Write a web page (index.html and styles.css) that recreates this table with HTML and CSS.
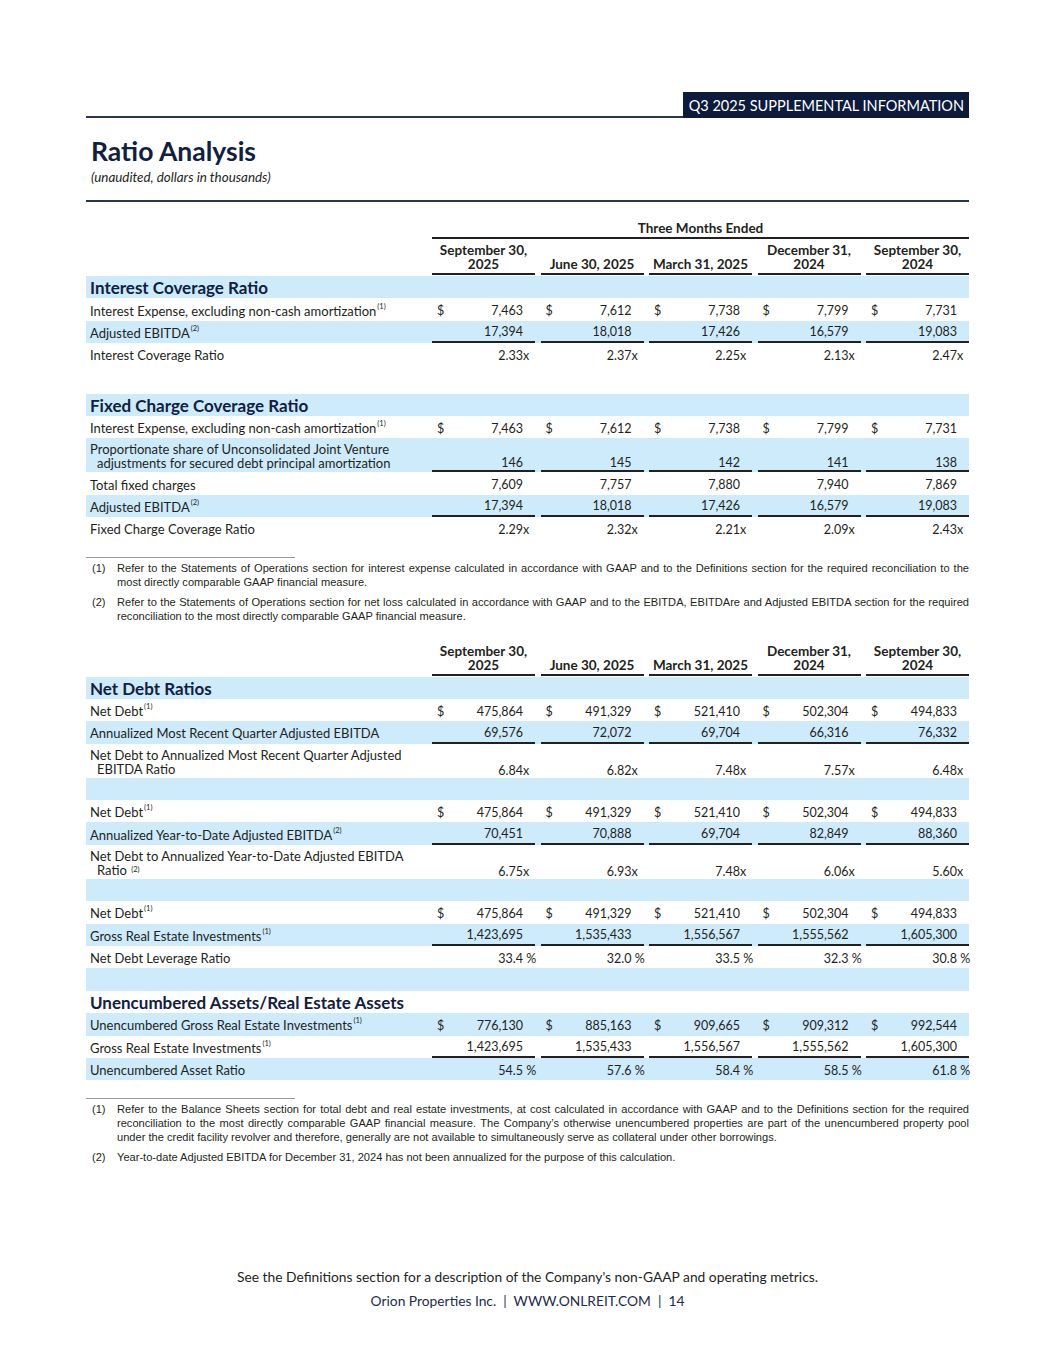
FILE: index.html
```html
<!DOCTYPE html>
<html>
<head>
<meta charset="utf-8">
<title>Ratio Analysis</title>
<link rel="stylesheet" href="styles.css">
</head>
<body>
<div class="page">
  <div class="topbar">
    <div class="topline"></div>
    <div class="tag">Q3 2025 SUPPLEMENTAL INFORMATION</div>
  </div>
  <h1 class="title">Ratio Analysis</h1>
  <div class="subtitle">(unaudited, dollars in thousands)</div>
  <div class="rule"></div>

  <div class="tbl t1">
    <div class="row tme"><div></div><div class="span5">Three Months Ended</div></div>
    <div class="row head">
      <div></div>
      <div class="h">September 30,<br>2025</div>
      <div class="h">June 30, 2025</div>
      <div class="h">March 31, 2025</div>
      <div class="h">December 31,<br>2024</div>
      <div class="h">September 30,<br>2024</div>
    </div>
    <div class="row sec blue"><div class="lbl">Interest Coverage Ratio</div></div>
    <div class="row">
      <div class="lbl">Interest Expense, excluding non-cash amortization <sup>(1)</sup></div>
      <div class="v"><span>$</span><span class="n">7,463</span></div>
      <div class="v"><span>$</span><span class="n">7,612</span></div>
      <div class="v"><span>$</span><span class="n">7,738</span></div>
      <div class="v"><span>$</span><span class="n">7,799</span></div>
      <div class="v"><span>$</span><span class="n">7,731</span></div>
    </div>
    <div class="row blue ul">
      <div class="lbl">Adjusted EBITDA <sup>(2)</sup></div>
      <div class="v"><span class="n">17,394</span></div>
      <div class="v"><span class="n">18,018</span></div>
      <div class="v"><span class="n">17,426</span></div>
      <div class="v"><span class="n">16,579</span></div>
      <div class="v"><span class="n">19,083</span></div>
    </div>
    <div class="row">
      <div class="lbl">Interest Coverage Ratio</div>
      <div class="v"><span class="n">2.33<span class="sx">x</span></span></div>
      <div class="v"><span class="n">2.37<span class="sx">x</span></span></div>
      <div class="v"><span class="n">2.25<span class="sx">x</span></span></div>
      <div class="v"><span class="n">2.13<span class="sx">x</span></span></div>
      <div class="v"><span class="n">2.47<span class="sx">x</span></span></div>
    </div>

    <div class="row sec blue gapabove"><div class="lbl">Fixed Charge Coverage Ratio</div></div>
    <div class="row">
      <div class="lbl">Interest Expense, excluding non-cash amortization <sup>(1)</sup></div>
      <div class="v"><span>$</span><span class="n">7,463</span></div>
      <div class="v"><span>$</span><span class="n">7,612</span></div>
      <div class="v"><span>$</span><span class="n">7,738</span></div>
      <div class="v"><span>$</span><span class="n">7,799</span></div>
      <div class="v"><span>$</span><span class="n">7,731</span></div>
    </div>
    <div class="row blue ul two">
      <div class="lbl">Proportionate share of Unconsolidated Joint Venture adjustments for secured debt principal amortization</div>
      <div class="v"><span class="n">146</span></div>
      <div class="v"><span class="n">145</span></div>
      <div class="v"><span class="n">142</span></div>
      <div class="v"><span class="n">141</span></div>
      <div class="v"><span class="n">138</span></div>
    </div>
    <div class="row">
      <div class="lbl">Total fixed charges</div>
      <div class="v"><span class="n">7,609</span></div>
      <div class="v"><span class="n">7,757</span></div>
      <div class="v"><span class="n">7,880</span></div>
      <div class="v"><span class="n">7,940</span></div>
      <div class="v"><span class="n">7,869</span></div>
    </div>
    <div class="row blue ul">
      <div class="lbl">Adjusted EBITDA <sup>(2)</sup></div>
      <div class="v"><span class="n">17,394</span></div>
      <div class="v"><span class="n">18,018</span></div>
      <div class="v"><span class="n">17,426</span></div>
      <div class="v"><span class="n">16,579</span></div>
      <div class="v"><span class="n">19,083</span></div>
    </div>
    <div class="row">
      <div class="lbl">Fixed Charge Coverage Ratio</div>
      <div class="v"><span class="n">2.29<span class="sx">x</span></span></div>
      <div class="v"><span class="n">2.32<span class="sx">x</span></span></div>
      <div class="v"><span class="n">2.21<span class="sx">x</span></span></div>
      <div class="v"><span class="n">2.09<span class="sx">x</span></span></div>
      <div class="v"><span class="n">2.43<span class="sx">x</span></span></div>
    </div>
  </div>

  <div class="notes n1">
    <div class="sep"></div>
    <div class="note"><span class="mk">(1)</span><p>Refer to the Statements of Operations section for interest expense calculated in accordance with GAAP and to the Definitions section for the required reconciliation to the most directly comparable GAAP financial measure.</p></div>
    <div class="note"><span class="mk">(2)</span><p>Refer to the Statements of Operations section for net loss calculated in accordance with GAAP and to the EBITDA, EBITDAre and Adjusted EBITDA section for the required reconciliation to the most directly comparable GAAP financial measure.</p></div>
  </div>

  <div class="tbl t2">
    <div class="row head">
      <div></div>
      <div class="h">September 30,<br>2025</div>
      <div class="h">June 30, 2025</div>
      <div class="h">March 31, 2025</div>
      <div class="h">December 31,<br>2024</div>
      <div class="h">September 30,<br>2024</div>
    </div>
    <div class="row sec blue"><div class="lbl">Net Debt Ratios</div></div>
    <div class="row">
      <div class="lbl">Net Debt <sup>(1)</sup></div>
      <div class="v"><span>$</span><span class="n">475,864</span></div>
      <div class="v"><span>$</span><span class="n">491,329</span></div>
      <div class="v"><span>$</span><span class="n">521,410</span></div>
      <div class="v"><span>$</span><span class="n">502,304</span></div>
      <div class="v"><span>$</span><span class="n">494,833</span></div>
    </div>
    <div class="row blue ul">
      <div class="lbl">Annualized Most Recent Quarter Adjusted EBITDA</div>
      <div class="v"><span class="n">69,576</span></div>
      <div class="v"><span class="n">72,072</span></div>
      <div class="v"><span class="n">69,704</span></div>
      <div class="v"><span class="n">66,316</span></div>
      <div class="v"><span class="n">76,332</span></div>
    </div>
    <div class="row two">
      <div class="lbl">Net Debt to Annualized Most Recent Quarter Adjusted EBITDA Ratio</div>
      <div class="v"><span class="n">6.84<span class="sx">x</span></span></div>
      <div class="v"><span class="n">6.82<span class="sx">x</span></span></div>
      <div class="v"><span class="n">7.48<span class="sx">x</span></span></div>
      <div class="v"><span class="n">7.57<span class="sx">x</span></span></div>
      <div class="v"><span class="n">6.48<span class="sx">x</span></span></div>
    </div>
    <div class="row blue"></div>
    <div class="row">
      <div class="lbl">Net Debt <sup>(1)</sup></div>
      <div class="v"><span>$</span><span class="n">475,864</span></div>
      <div class="v"><span>$</span><span class="n">491,329</span></div>
      <div class="v"><span>$</span><span class="n">521,410</span></div>
      <div class="v"><span>$</span><span class="n">502,304</span></div>
      <div class="v"><span>$</span><span class="n">494,833</span></div>
    </div>
    <div class="row blue ul">
      <div class="lbl">Annualized Year-to-Date Adjusted EBITDA <sup>(2)</sup></div>
      <div class="v"><span class="n">70,451</span></div>
      <div class="v"><span class="n">70,888</span></div>
      <div class="v"><span class="n">69,704</span></div>
      <div class="v"><span class="n">82,849</span></div>
      <div class="v"><span class="n">88,360</span></div>
    </div>
    <div class="row two">
      <div class="lbl">Net Debt to Annualized Year-to-Date Adjusted EBITDA Ratio&nbsp;<sup>(2)</sup></div>
      <div class="v"><span class="n">6.75<span class="sx">x</span></span></div>
      <div class="v"><span class="n">6.93<span class="sx">x</span></span></div>
      <div class="v"><span class="n">7.48<span class="sx">x</span></span></div>
      <div class="v"><span class="n">6.06<span class="sx">x</span></span></div>
      <div class="v"><span class="n">5.60<span class="sx">x</span></span></div>
    </div>
    <div class="row blue"></div>
    <div class="row">
      <div class="lbl">Net Debt <sup>(1)</sup></div>
      <div class="v"><span>$</span><span class="n">475,864</span></div>
      <div class="v"><span>$</span><span class="n">491,329</span></div>
      <div class="v"><span>$</span><span class="n">521,410</span></div>
      <div class="v"><span>$</span><span class="n">502,304</span></div>
      <div class="v"><span>$</span><span class="n">494,833</span></div>
    </div>
    <div class="row blue ul">
      <div class="lbl">Gross Real Estate Investments <sup>(1)</sup></div>
      <div class="v"><span class="n">1,423,695</span></div>
      <div class="v"><span class="n">1,535,433</span></div>
      <div class="v"><span class="n">1,556,567</span></div>
      <div class="v"><span class="n">1,555,562</span></div>
      <div class="v"><span class="n">1,605,300</span></div>
    </div>
    <div class="row">
      <div class="lbl">Net Debt Leverage Ratio</div>
      <div class="v"><span class="n">33.4<span class="sp"> %</span></span></div>
      <div class="v"><span class="n">32.0<span class="sp"> %</span></span></div>
      <div class="v"><span class="n">33.5<span class="sp"> %</span></span></div>
      <div class="v"><span class="n">32.3<span class="sp"> %</span></span></div>
      <div class="v"><span class="n">30.8<span class="sp"> %</span></span></div>
    </div>
    <div class="row blue"></div>
    <div class="row sec"><div class="lbl">Unencumbered Assets/Real Estate Assets</div></div>
    <div class="row blue">
      <div class="lbl">Unencumbered Gross Real Estate Investments <sup>(1)</sup></div>
      <div class="v"><span>$</span><span class="n">776,130</span></div>
      <div class="v"><span>$</span><span class="n">885,163</span></div>
      <div class="v"><span>$</span><span class="n">909,665</span></div>
      <div class="v"><span>$</span><span class="n">909,312</span></div>
      <div class="v"><span>$</span><span class="n">992,544</span></div>
    </div>
    <div class="row ul">
      <div class="lbl">Gross Real Estate Investments <sup>(1)</sup></div>
      <div class="v"><span class="n">1,423,695</span></div>
      <div class="v"><span class="n">1,535,433</span></div>
      <div class="v"><span class="n">1,556,567</span></div>
      <div class="v"><span class="n">1,555,562</span></div>
      <div class="v"><span class="n">1,605,300</span></div>
    </div>
    <div class="row blue">
      <div class="lbl">Unencumbered Asset Ratio</div>
      <div class="v"><span class="n">54.5<span class="sp"> %</span></span></div>
      <div class="v"><span class="n">57.6<span class="sp"> %</span></span></div>
      <div class="v"><span class="n">58.4<span class="sp"> %</span></span></div>
      <div class="v"><span class="n">58.5<span class="sp"> %</span></span></div>
      <div class="v"><span class="n">61.8<span class="sp"> %</span></span></div>
    </div>
  </div>

  <div class="notes n2">
    <div class="sep"></div>
    <div class="note"><span class="mk">(1)</span><p>Refer to the Balance Sheets section for total debt and real estate investments, at cost calculated in accordance with GAAP and to the Definitions section for the required reconciliation to the most directly comparable GAAP financial measure. The Company’s otherwise unencumbered properties are part of the unencumbered property pool under the credit facility revolver and therefore, generally are not available to simultaneously serve as collateral under other borrowings.</p></div>
    <div class="note"><span class="mk">(2)</span><p>Year-to-date Adjusted EBITDA for December 31, 2024 has not been annualized for the purpose of this calculation.</p></div>
  </div>

  <div class="footer">
    <div class="f1">See the Definitions section for a description of the Company's non-GAAP and operating metrics.</div>
    <div class="f2">Orion Properties Inc. &nbsp;|&nbsp; WWW.ONLREIT.COM &nbsp;| &nbsp;14</div>
  </div>
</div>
</body>
</html>
```

FILE: styles.css
```css
* { box-sizing: border-box; }
html, body { margin: 0; padding: 0; background: #ffffff; }
body {
  font-family: "Lato", "Open Sans", sans-serif;
  color: #231f20;
}
.page {
  width: 1055px;
  height: 1365px;
  padding: 92px 86px 51px 86px;
  display: flex;
  flex-direction: column;
}
.topbar {
  display: flex;
  align-items: flex-end;
  height: 26px;
}
.topline {
  flex: 1;
  height: 2px;
  background: #2a3650;
}
.tag {
  background: #0c1a3b;
  color: #ffffff;
  font-size: 14.5px;
  height: 26px;
  line-height: 27px;
  padding: 0 5px 0 6px;
  white-space: nowrap;
}
.title {
  margin: 17px 0 0 5px;
  font-size: 26.5px;
  font-weight: 700;
  color: #10203f;
  line-height: 32px;
}
.subtitle {
  margin: 2px 0 0 5px;
  font-size: 13.4px;
  font-style: italic;
  line-height: 16px;
}
.rule {
  margin-top: 15px;
  height: 2px;
  background: #2a3650;
}
.tbl { font-size: 13px; }
.t1 { margin-top: 18px; }
.row {
  display: grid;
  grid-template-columns: 1fr repeat(5, 103px);
  column-gap: 5.5px;
  height: 22.4px;
  align-items: stretch;
}
.row.blue { background: #cdebfb; }
.row.two { height: 34px; }
.gapabove { margin-top: 28px; }
.lbl {
  padding-left: 4px;
  padding-top: 2px;
  display: flex;
  align-items: center;
  white-space: nowrap;
}
.two .lbl {
  white-space: normal;
  padding-left: 11px;
  text-indent: -7px;
  line-height: 14px;
  display: block;
  padding-top: 4px;
}
.sec .lbl {
  font-size: 17px;
  font-weight: 700;
  color: #10203f;
  grid-column: 1 / 7;
  padding-top: 1px;
}
sup {
  font-size: 7.5px;
  line-height: 0;
  vertical-align: 0;
  position: relative;
  top: -4px;
  margin-left: 1px;
}
.two sup { top: -3px; }
.v {
  display: flex;
  align-items: center;
  padding: 2px 12px 0 5px;
  white-space: nowrap;
  font-size: 12.5px;
}
.two .v { align-items: flex-end; padding-bottom: 0; }
.ul .v { border-bottom: 2px solid #231f20; }
.n { margin-left: auto; }
.sx, .sp {
  display: inline-block;
  width: 0;
  white-space: pre;
  overflow: visible;
}
.tme { height: 19px; }
.tme .span5 {
  grid-column: 2 / 7;
  text-align: center;
  font-weight: 700;
  font-size: 13.5px;
  border-bottom: 2px solid #231f20;
  line-height: 16px;
}
.head { height: 36px; margin-bottom: 1px; }
.head .h {
  font-weight: 700;
  font-size: 13.5px;
  text-align: center;
  line-height: 14px;
  border-bottom: 2px solid #231f20;
  display: flex;
  align-items: flex-end;
  justify-content: center;
  padding-bottom: 2px;
  white-space: nowrap;
}
.notes {
  font-family: "Liberation Sans Narrow", "Liberation Sans", sans-serif;
  font-size: 11.1px;
  line-height: 14px;
}
.n1 { margin-top: 17px; }
.sep {
  width: 209px;
  height: 1px;
  background: #9a9a9a;
  margin-bottom: 3px;
}
.note {
  display: flex;
  margin-bottom: 6px;
}
.note .mk {
  width: 31px;
  padding-left: 6px;
  flex: none;
}
.note p {
  margin: 0;
  flex: 1;
  text-align: justify;
}
.t2 { margin-top: 11px; }
.n2 { margin-top: 18px; }
.footer {
  margin-top: auto;
  text-align: center;
  font-size: 13.8px;
}
.f1 { line-height: 22px; color: #231f20; }
.f2 { line-height: 26px; color: #1d2b4c; }
```
